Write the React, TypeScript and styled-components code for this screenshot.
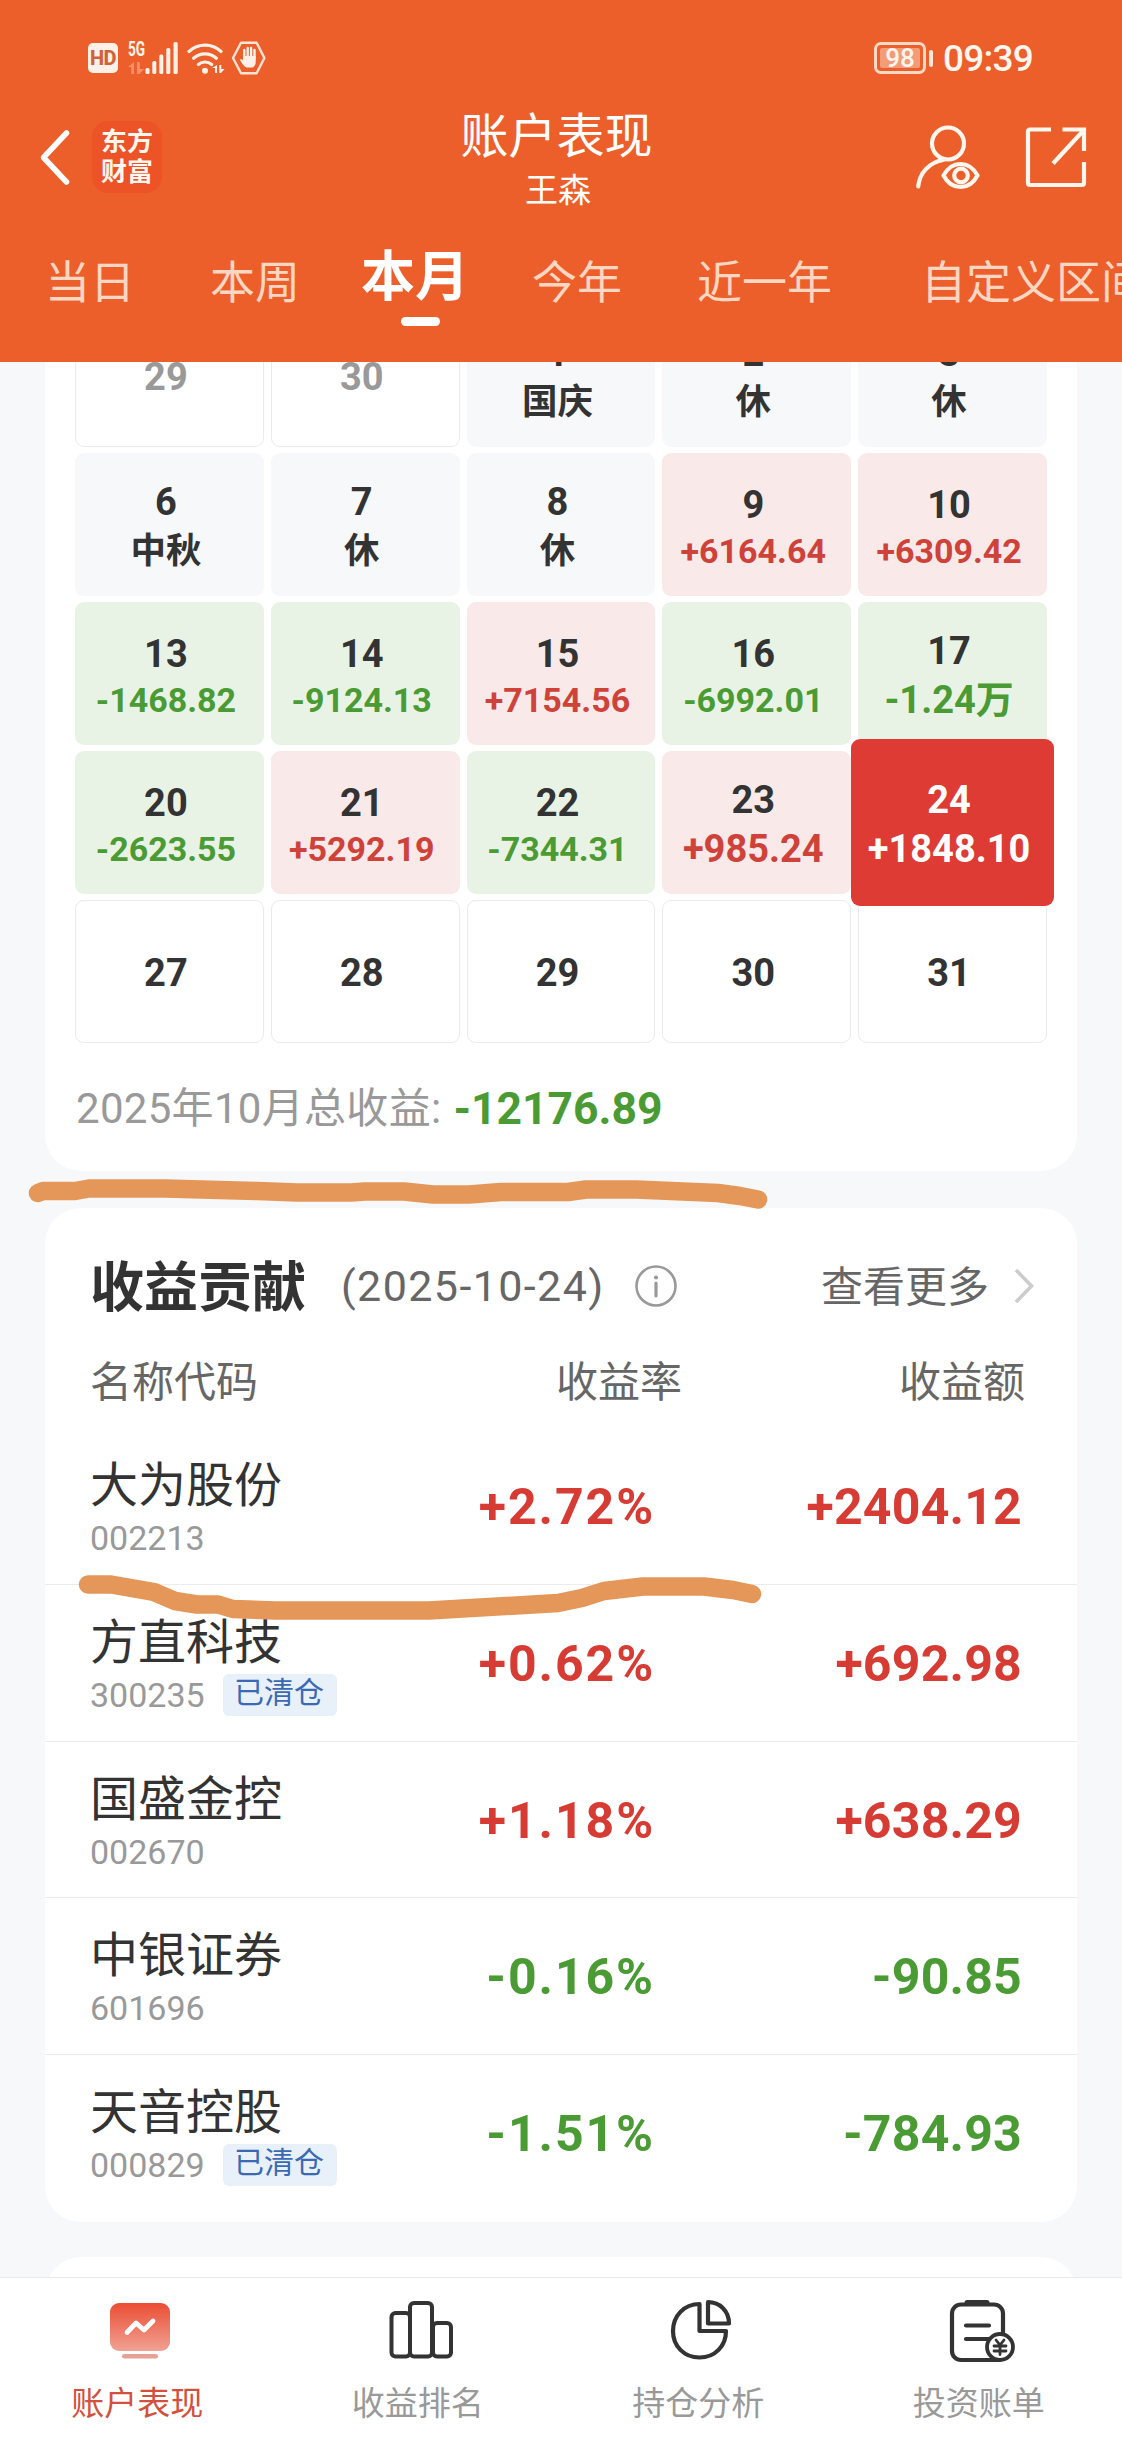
import React from "react";
import styled, { createGlobalStyle, css } from "styled-components";

const RED = "#d63c34";
const GREEN = "#4b9b35";
const INK = "#333333";

const GlobalStyle = createGlobalStyle`
  * { box-sizing: border-box; }
  body {
    margin: 0;
    background: #f7f8fa;
    color: ${INK};
    font-family: Roboto, "Noto Sans CJK SC", sans-serif;
  }
`;

const Screen = styled.main`
  position: relative;
  display: flex;
  flex-direction: column;
  width: 1122px;
  height: 2442px;
  overflow: hidden;
  background: #f7f8fa;
`;

/* ---------- header ---------- */

const Header = styled.header`
  flex: none;
  display: flex;
  flex-direction: column;
  height: 362px;
  background: #ec5f2b;
  color: #fff6ee;
`;

const StatusBar = styled.div`
  display: flex;
  justify-content: space-between;
  align-items: center;
  height: 76px;
  margin-top: 20px;
  padding: 0 89px 0 88px;
`;

const StatusGroup = styled.div`
  display: flex;
  align-items: center;
`;

const HdBadge = styled.span`
  width: 30px;
  height: 30px;
  margin-right: 10px;
  border-radius: 5px;
  background: #fff1e8;
  color: #d0623a;
  font-size: 20px;
  font-weight: 800;
  line-height: 31px;
  letter-spacing: -0.5px;
  text-align: center;
`;

const Network = styled.div`
  display: flex;
  flex-direction: column;
  width: 17px;
  height: 32px;
  justify-content: space-between;
  font-size: 20px;
  font-weight: 700;
  line-height: 15px;
`;

const NetworkLabel = styled.span`
  display: block;
  width: 24px;
  transform: scaleX(0.68);
  transform-origin: left;
`;

const Battery = styled.div`
  position: relative;
  width: 52px;
  height: 32px;
  margin-right: 17px;
  padding: 3px;
  border: 3px solid #ffd9c5;
  border-radius: 7px;
  &::after {
    content: "";
    position: absolute;
    top: 5px;
    right: -10px;
    width: 4px;
    height: 17px;
    border-radius: 2px;
    background: #ffe6d8;
  }
`;

const BatteryFill = styled.div`
  height: 20px;
  border-radius: 2px;
  background: #f49b77;
  font-size: 26px;
  font-weight: 500;
  line-height: 21px;
  text-align: center;
`;

const Clock = styled.span`
  width: 90px;
  padding-top: 1px;
  font-size: 37px;
  font-weight: 500;
  line-height: 40px;
  letter-spacing: -0.8px;
`;

const TitleBar = styled.div`
  display: grid;
  grid-template-columns: 1fr 200px 1fr;
  height: 120px;
  padding: 0 35px 0 37px;
`;

const TitleLeft = styled.div`
  display: flex;
  align-items: center;
  height: 122px;
`;

const Logo = styled.div`
  width: 70px;
  height: 72px;
  margin-left: 20px;
  padding-top: 6px;
  border-radius: 16px;
  background: #ec5326;
  font-size: 26px;
  font-weight: 700;
  line-height: 30px;
  text-align: center;
`;

const TitleText = styled.div`
  display: flex;
  flex-direction: column;
  align-items: center;
  padding-top: 15px;
  margin-left: -11px;
  color: #fff;
`;

const Title = styled.h1`
  margin: 0;
  font-size: 48px;
  font-weight: 400;
  line-height: 52px;
  white-space: nowrap;
`;

const Owner = styled.span`
  padding-left: 3px;
  font-size: 33px;
  line-height: 54px;
  margin-top: 1px;
`;

const TitleActions = styled.div`
  display: flex;
  align-items: center;
  justify-content: flex-end;
  height: 122px;
  gap: 44px;
`;

const Tabs = styled.nav`
  display: flex;
  height: 146px;
  padding-left: 45px;
`;

const Tab = styled.div<{ $active?: boolean; $before?: number }>`
  flex: none;
  display: flex;
  flex-direction: column;
  align-items: center;
  margin-left: ${(p) => p.$before ?? 0}px;
  padding-top: 37px;
  color: ${(p) => (p.$active ? "#fff" : "#ffd6c2")};
  font-size: ${(p) => (p.$active ? 54 : 45)}px;
  font-weight: ${(p) => (p.$active ? 700 : 400)};
  line-height: ${(p) => (p.$active ? 50 : 62)}px;
  white-space: nowrap;
  &::after {
    content: "";
    display: ${(p) => (p.$active ? "block" : "none")};
    width: 39px;
    height: 9px;
    margin: 14px 0 0 10px;
    border-radius: 5px;
    background: #fff;
  }
`;

/* ---------- cards ---------- */

const Content = styled.div`
  flex: 1;
  min-height: 0;
  overflow: hidden;
  padding: 0 45px;
`;

const Card = styled.section`
  border-radius: 36px;
  background: #fff;
`;

const CalendarCard = styled(Card)`
  height: 867px;
  margin-top: -58px;
  padding: 0 30px;
`;

const Grid = styled.div`
  display: grid;
  grid-template-columns: repeat(5, 1fr);
  grid-auto-rows: 143px;
  gap: 6px 7px;
`;

type Tone = "plain" | "rest" | "up" | "down" | "selected";

const cellTone: Record<Tone, ReturnType<typeof css>> = {
  plain: css`
    padding-top: 2px;
    border: 1px solid #ebebeb;
  `,
  rest: css`background: #f7f8fa;`,
  up: css`background: #f9e9e9;`,
  down: css`background: #e8f3e6;`,
  selected: css`
    z-index: 1;
    margin: -12px -7px;
    background: #dd3b33;
  `,
};

const Cell = styled.div<{ $tone: Tone }>`
  position: relative;
  display: flex;
  flex-direction: column;
  align-items: center;
  justify-content: center;
  gap: 3px;
  padding: 6px 7px 0 0;
  border-radius: 9px;
  ${(p) => cellTone[p.$tone]}
`;

const DayNumber = styled.span<{ $muted?: boolean; $light?: boolean }>`
  color: ${(p) => (p.$light ? "#fff" : p.$muted ? "#999" : INK)};
  font-size: 38px;
  font-weight: 700;
  line-height: 44px;
`;

const DayNote = styled.span<{ $tone: Tone; $large?: boolean }>`
  color: ${(p) =>
    p.$tone === "up" ? "#cf423a" : p.$tone === "down" ? GREEN : p.$tone === "selected" ? "#fff" : INK};
  font-size: ${(p) => (p.$tone === "rest" ? 35.5 : p.$large ? 38 : 34)}px;
  font-weight: 700;
  line-height: ${(p) => (p.$tone === "rest" || p.$large ? 48 : 42)}px;
  white-space: nowrap;
`;

const Total = styled.p`
  display: flex;
  align-items: center;
  gap: 12px;
  margin: 36px 0 0 1px;
  color: #999;
  font-size: 42px;
  font-weight: 400;
  line-height: 60px;
  letter-spacing: 0.3px;
`;

const TotalValue = styled.strong`
  color: ${GREEN};
  font-size: 44.5px;
  font-weight: 700;
  letter-spacing: 0;
`;

const ContributionCard = styled(Card)`
  height: 1014px;
  margin-top: 37px;
`;

const SectionHead = styled.div`
  display: flex;
  align-items: center;
  height: 118px;
  padding: 38px 43px 0 45px;
`;

const SectionTitle = styled.h2`
  margin: 0;
  padding-top: 5px;
  font-size: 54px;
  font-weight: 700;
  line-height: 76px;
`;

const SectionDate = styled.span`
  width: 293px;
  margin-left: 35px;
  color: #666;
  font-size: 43px;
  line-height: 76px;
  letter-spacing: 1.4px;
  white-space: nowrap;
`;

const More = styled.span`
  margin: 0 25px 0 auto;
  padding-top: 3px;
  color: #666;
  font-size: 42px;
  line-height: 76px;
`;

const Columns = styled.div`
  display: grid;
  grid-template-columns: 350px 242px 1fr;
  padding: 0 52px 0 45px;
  height: 102px;
  color: #666;
  font-size: 42px;
  line-height: 114px;
`;

const RightText = styled.span`
  text-align: right;
`;

const StockRow = styled.div`
  display: grid;
  grid-template-columns: 350px 215px 1fr;
  height: 156.4px;
  padding: 0 55px 0 45px;
  & + & {
    border-top: 1.5px solid #ececec;
  }
`;

const StockName = styled.div`
  padding-top: 25px;
  font-size: 48px;
  line-height: 66px;
`;

const StockMeta = styled.div`
  display: flex;
  align-items: center;
  gap: 19px;
  height: 42px;
  margin-top: -2px;
`;

const StockCode = styled.span`
  width: 114px;
  color: #999;
  font-size: 34px;
  font-weight: 400;
  line-height: 42px;
`;

const SoldTag = styled.span`
  width: 114px;
  height: 42px;
  padding-right: 2px;
  border-radius: 6px;
  background: #e8f1fa;
  color: #3c69b3;
  font-size: 30px;
  line-height: 38px;
  text-align: center;
`;

const Figure = styled.span<{ $down: boolean; $spacing?: number }>`
  color: ${(p) => (p.$down ? GREEN : RED)};
  font-size: 50px;
  font-weight: 700;
  line-height: 159px;
  letter-spacing: ${(p) => p.$spacing ?? 0}px;
  text-align: right;
  white-space: nowrap;
`;

const NextCard = styled(Card)`
  height: 80px;
  margin-top: 35px;
`;

/* ---------- bottom navigation ---------- */

const BottomNav = styled.nav`
  flex: none;
  display: grid;
  grid-template-columns: repeat(4, 1fr);
  height: 165px;
  border-top: 1px solid #e9eaec;
  background: #fff;
`;

const NavItem = styled.div<{ $active?: boolean }>`
  display: flex;
  flex-direction: column;
  align-items: center;
  padding-top: 20px;
  color: ${(p) => (p.$active ? "#d2513e" : "#999")};
  font-size: 33px;
  line-height: 44px;
`;

const NavLabel = styled.span`
  margin: 18px 6px 0 0;
`;

const Marks = styled.svg`
  position: absolute;
  top: 0;
  left: 0;
  z-index: 3;
  pointer-events: none;
`;

/* ---------- icons ---------- */

const DataArrows = ({ color = "#f9906a" }: { color?: string }) => (
  <svg width="16" height="12" viewBox="0 0 16 12" fill={color}>
    <path d="M6 0v12H3.200V5H0zM9 0v12h2.600L16 7h-4.200V0z" />
  </svg>
);

const SignalIcon = () => (
  <svg width="34" height="32" viewBox="0 0 34 32" fill="#fff1e8">
    <rect x="0.500" y="26" width="4" height="6" rx="1.500" />
    <rect x="7.300" y="19" width="4" height="13" rx="1.500" />
    <rect x="14.300" y="12.500" width="4" height="19.500" rx="1.500" />
    <rect x="21.300" y="6" width="4" height="26" rx="1.500" />
    <rect x="28.500" y="0" width="4.200" height="32" rx="1.500" />
  </svg>
);

const SpacedIcon = styled.svg<{ $before: number }>`
  margin-left: ${(p) => p.$before}px;
`;

const WifiIcon = () => (
  <SpacedIcon $before={8} width="38" height="32" viewBox="0 0 38 32">
    <g fill="none" stroke="#fff1e8" strokeWidth="3.200" strokeLinecap="round">
      <path d="M2 9.500a23.500 23.500 0 0 1 32 0" />
      <path d="M6.600 16.300a17 17 0 0 1 22.800 0" />
      <path d="M11.300 22.500a10.300 10.300 0 0 1 13.400 0" />
    </g>
    <circle cx="18" cy="28.700" r="3" fill="#fff1e8" />
    <path d="M30 23v8h-2v-5h-3zM32.300 23v8h1.700l3.500-4h-3.200v-4z" fill="#fff1e8" />
  </SpacedIcon>
);

const HandIcon = () => (
  <SpacedIcon $before={6} width="36" height="34" viewBox="0 0 36 34">
    <path
      d="M10 1.700h15.600L33.400 17l-7.800 15.300H10L2 17z"
      fill="none"
      stroke="#ffe3d4"
      strokeWidth="2.400"
      strokeLinejoin="round"
    />
    <path
      d="M13.300 18V9M16.700 16V7M20.100 16V7M23.500 18V9"
      stroke="#fff1e8"
      strokeWidth="2.400"
      strokeLinecap="round"
    />
    <path
      d="M12.100 15h12.600v6c0 3-1.500 4.800-3 5.600h-6.200c-2.800-1.400-5-4.800-6.600-7.800 1.200-1 2.400-.4 3.200.8z"
      fill="#fff1e8"
    />
  </SpacedIcon>
);

const BackIcon = () => (
  <svg width="35" height="58" viewBox="0 0 35 58">
    <path d="M29.500 5 6.500 29.500 29.500 54" fill="none" stroke="#fff" strokeWidth="5.500" strokeLinecap="round" strokeLinejoin="round" />
  </svg>
);

const UserEyeIcon = () => (
  <svg width="66" height="66" viewBox="0 0 66 66" fill="none" stroke="#fff6ee" strokeWidth="4.200" strokeLinecap="round">
    <circle cx="33" cy="19.500" r="16" />
    <path d="M28 36C14 38.500 4.500 49 3.200 62.500" />
    <path d="M28.500 51.500c4-7.500 10-11.500 17-11.500s13 4 17 11.500c-4 7.500-10 11.500-17 11.500s-13-4-17-11.500z" strokeLinejoin="round" />
    <circle cx="46" cy="51.500" r="6.800" />
  </svg>
);

const ShareIcon = () => (
  <svg width="62" height="62" viewBox="0 0 62 62" fill="none" stroke="#fff6ee" strokeWidth="4.200" strokeLinejoin="round">
    <path d="M26 3.500H5a2 2 0 0 0-2 2V57a2 2 0 0 0 2 2h52a2 2 0 0 0 2-2V36" />
    <path d="M37.500 3.500H59V25" strokeLinejoin="miter" />
    <path d="M28 37.500 58 5" />
  </svg>
);

const InfoIcon = () => (
  <svg width="44" height="44" viewBox="0 0 44 44">
    <circle cx="22" cy="22" r="19.500" fill="none" stroke="#999" strokeWidth="2.600" />
    <circle cx="22" cy="13.500" r="2.100" fill="#999" />
    <path d="M22 19v13" stroke="#999" strokeWidth="3.200" strokeLinecap="round" />
  </svg>
);

const ChevronIcon = () => (
  <svg width="20" height="36" viewBox="0 0 20 36">
    <path d="M2 2 17.500 18 2 34" fill="none" stroke="#ccc" strokeWidth="3.600" />
  </svg>
);

const PerformanceIcon = () => (
  <svg width="66" height="66" viewBox="0 0 66 66">
    <defs>
      <linearGradient id="monitor" x1="0" y1="0" x2="0" y2="1">
        <stop offset="0" stopColor="#eb4d33" />
        <stop offset="1" stopColor="#f0a294" />
      </linearGradient>
    </defs>
    <rect x="3" y="5" width="60" height="48" rx="9" fill="url(#monitor)" />
    <path d="m20 34.500 9-9.500 8 7 9-9" fill="none" stroke="#fff" strokeWidth="4.800" strokeLinecap="round" strokeLinejoin="round" />
    <rect x="15" y="56" width="36" height="4.500" rx="2.200" fill="#e6a193" />
  </svg>
);

const RankIcon = () => (
  <svg width="66" height="66" viewBox="0 0 66 66" fill="none" stroke={INK} strokeWidth="4">
    <rect x="3.500" y="15" width="18.500" height="43.500" rx="4" />
    <rect x="22" y="5" width="22" height="53.500" rx="4" />
    <rect x="45" y="25" width="18" height="33.500" rx="4" />
  </svg>
);

const PieIcon = () => (
  <svg width="66" height="66" viewBox="0 0 66 66" fill="none" stroke={INK} strokeWidth="4.200" strokeLinejoin="round">
    <path d="M31.500 6v27H58c0 15-11 26.500-26.500 26.500S5 48 5 33 16 6 31.500 6z" />
    <path d="M40 4.200v21.300h21C61 13 52 4.200 40 4.200z" />
  </svg>
);

const BillIcon = () => (
  <svg width="68" height="66" viewBox="0 0 68 66" fill="none" stroke={INK} strokeWidth="4.200" strokeLinecap="round">
    <path d="M55 34V15.500a9 9 0 0 0-9-9H13a9 9 0 0 0-9 9V53a9 9 0 0 0 9 9h38" />
    <path d="M19 4.500h20" strokeWidth="5" />
    <path d="M18 27.500h23M18 41h23" />
    <circle cx="52" cy="49" r="13" fill="#fff" strokeWidth="3.800" />
    <path d="m48 42 4 5 4-5M46 48h12M46 53h12M52 47.500v9" strokeWidth="2.800" />
  </svg>
);

/* ---------- data ---------- */

interface Day {
  day: number;
  note?: string;
  tone: Tone;
  muted?: boolean;
  large?: boolean;
}

const days: Day[] = [
  { day: 29, tone: "plain", muted: true },
  { day: 30, tone: "plain", muted: true },
  { day: 1, note: "国庆", tone: "rest" },
  { day: 2, note: "休", tone: "rest" },
  { day: 3, note: "休", tone: "rest" },
  { day: 6, note: "中秋", tone: "rest" },
  { day: 7, note: "休", tone: "rest" },
  { day: 8, note: "休", tone: "rest" },
  { day: 9, note: "+6164.64", tone: "up" },
  { day: 10, note: "+6309.42", tone: "up" },
  { day: 13, note: "-1468.82", tone: "down" },
  { day: 14, note: "-9124.13", tone: "down" },
  { day: 15, note: "+7154.56", tone: "up" },
  { day: 16, note: "-6992.01", tone: "down" },
  { day: 17, note: "-1.24万", tone: "down", large: true },
  { day: 20, note: "-2623.55", tone: "down" },
  { day: 21, note: "+5292.19", tone: "up" },
  { day: 22, note: "-7344.31", tone: "down" },
  { day: 23, note: "+985.24", tone: "up", large: true },
  { day: 24, note: "+1848.10", tone: "selected", large: true },
  { day: 27, tone: "plain" },
  { day: 28, tone: "plain" },
  { day: 29, tone: "plain" },
  { day: 30, tone: "plain" },
  { day: 31, tone: "plain" },
];

const stocks = [
  { name: "大为股份", code: "002213", rate: "+2.72%", amount: "+2404.12" },
  { name: "方直科技", code: "300235", sold: true, rate: "+0.62%", amount: "+692.98" },
  { name: "国盛金控", code: "002670", rate: "+1.18%", amount: "+638.29" },
  { name: "中银证券", code: "601696", rate: "-0.16%", amount: "-90.85" },
  { name: "天音控股", code: "000829", sold: true, rate: "-1.51%", amount: "-784.93" },
];

export default function App() {
  return (
    <Screen>
      <GlobalStyle />
      <Header>
        <StatusBar>
          <StatusGroup>
            <HdBadge>HD</HdBadge>
            <Network>
              <NetworkLabel>5G</NetworkLabel>
              <DataArrows />
            </Network>
            <SignalIcon />
            <WifiIcon />
            <HandIcon />
          </StatusGroup>
          <StatusGroup>
            <Battery>
              <BatteryFill>98</BatteryFill>
            </Battery>
            <Clock>09:39</Clock>
          </StatusGroup>
        </StatusBar>
        <TitleBar>
          <TitleLeft>
            <BackIcon />
            <Logo>
              东方
              <br />
              财富
            </Logo>
          </TitleLeft>
          <TitleText>
            <Title>账户表现</Title>
            <Owner>王森</Owner>
          </TitleText>
          <TitleActions>
            <UserEyeIcon />
            <ShareIcon />
          </TitleActions>
        </TitleBar>
        <Tabs>
          <Tab>当日</Tab>
          <Tab $before={75}>本周</Tab>
          <Tab $active $before={61}>本月</Tab>
          <Tab $before={63}>今年</Tab>
          <Tab $before={75}>近一年</Tab>
          <Tab $before={89}>自定义区间</Tab>
        </Tabs>
      </Header>

      <Content>
        <CalendarCard>
          <Grid>
            {days.map((d, i) => (
              <Cell key={i} $tone={d.tone}>
                <DayNumber $muted={d.muted} $light={d.tone === "selected"}>
                  {d.day}
                </DayNumber>
                {d.note && (
                  <DayNote $tone={d.tone} $large={d.large}>
                    {d.note}
                  </DayNote>
                )}
              </Cell>
            ))}
          </Grid>
          <Total>
            2025年10月总收益:
            <TotalValue>-12176.89</TotalValue>
          </Total>
        </CalendarCard>

        <ContributionCard>
          <SectionHead>
            <SectionTitle>收益贡献</SectionTitle>
            <SectionDate>(2025-10-24)</SectionDate>
            <InfoIcon />
            <More>查看更多</More>
            <ChevronIcon />
          </SectionHead>
          <Columns>
            <span>名称代码</span>
            <RightText>收益率</RightText>
            <RightText>收益额</RightText>
          </Columns>
          {stocks.map((s) => (
            <StockRow key={s.code}>
              <div>
                <StockName>{s.name}</StockName>
                <StockMeta>
                  <StockCode>{s.code}</StockCode>
                  {s.sold && <SoldTag>已清仓</SoldTag>}
                </StockMeta>
              </div>
              <Figure $down={s.rate.startsWith("-")} $spacing={1.9}>
                {s.rate}
              </Figure>
              <Figure $down={s.amount.startsWith("-")} $spacing={0.2}>
                {s.amount}
              </Figure>
            </StockRow>
          ))}
        </ContributionCard>
        <NextCard />
      </Content>

      <BottomNav>
        <NavItem $active>
          <PerformanceIcon />
          <NavLabel>账户表现</NavLabel>
        </NavItem>
        <NavItem>
          <RankIcon />
          <NavLabel>收益排名</NavLabel>
        </NavItem>
        <NavItem>
          <PieIcon />
          <NavLabel>持仓分析</NavLabel>
        </NavItem>
        <NavItem>
          <BillIcon />
          <NavLabel>投资账单</NavLabel>
        </NavItem>
      </BottomNav>

      <Marks width="1122" height="2442" viewBox="0 0 1122 2442" fill="none" stroke="#e49759" strokeWidth="18.500" strokeLinecap="round" strokeLinejoin="round">
        <path d="M38 1193 43 1191H75L89 1188.500H165L258 1191 297 1192.500H351L365 1191.500 404 1191.500 433 1194.500H469L501 1192H568L586 1189.500H636L718 1193 740 1196 758 1199.500" />
        <path d="M88 1584.500H111L154 1592 175 1601 197 1604.500H218L233 1609 275 1610.500H429L558 1603 582 1598 604 1591 643 1586.500H704L733 1590 752 1594" />
      </Marks>
    </Screen>
  );
}
